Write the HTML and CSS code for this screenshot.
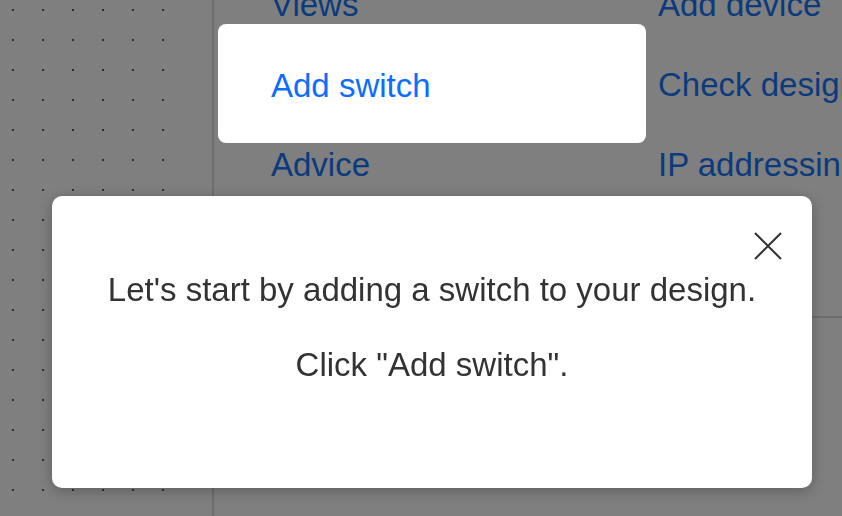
FILE: index.html
```html
<!DOCTYPE html>
<html lang="en">
<head>
<meta charset="utf-8">
<title>Add switch tour</title>
<link rel="stylesheet" href="styles.css">
</head>
<body>
<div class="app">
  <div class="canvas"><div class="dots"></div></div>
  <div class="panel">
    <nav class="menu">
      <a class="menu-link">Views</a>
      <a class="menu-link">Add device</a>
      <a class="menu-link">Add switch</a>
      <a class="menu-link">Check design</a>
      <a class="menu-link">Advice</a>
      <a class="menu-link">IP addressing</a>
    </nav>
    <div class="separator"></div>
  </div>
</div>

<div class="overlay"></div>

<div class="spotlight">
  <a class="spotlight-link">Add switch</a>
</div>

<div class="popover">
  <button class="close" aria-label="Close">
    <svg width="28" height="28" viewBox="0 0 28 28"><path d="M1 1 L27 27 M27 1 L1 27" stroke="#333" stroke-width="2" fill="none"/></svg>
  </button>
  <p class="tour-text">Let's start by adding a switch to your design.</p>
  <p class="tour-text">Click "Add switch".</p>
</div>
</body>
</html>
```

FILE: styles.css
```css
html, body {
  margin: 0;
  padding: 0;
  height: 516px;
  overflow: hidden;
  background: #fff;
  font-family: "Liberation Sans", Arial, sans-serif;
}

.app {
  display: flex;
  height: 516px;
}

.canvas {
  width: 212px;
  flex: none;
  border-right: 2px solid #dcdcdc;
  background-color: #fff;
}

.dots {
  width: 178px;
  height: 505px;
  background-image: radial-gradient(circle, #5e5e5e 0.8px, transparent 1.2px);
  background-size: 30px 30px;
  background-position: -2px -5px;
}

.panel {
  flex: 1;
  display: flex;
  flex-direction: column;
}

.menu {
  display: grid;
  grid-template-columns: 387px 1fr;
  grid-auto-rows: 80px;
  margin-top: -35px;
  padding-left: 57px;
  white-space: nowrap;
}

.menu-link {
  font-size: 33px;
  line-height: 80px;
  color: #1676f8;
}

.separator {
  margin-top: 111px;
  height: 2px;
  background: #dcdcdc;
}

.overlay {
  position: fixed;
  inset: 0;
  background: rgba(0, 0, 0, 0.5);
}

.spotlight {
  position: absolute;
  left: 218px;
  top: 24px;
  width: 428px;
  height: 119px;
  box-sizing: border-box;
  padding-left: 53px;
  display: flex;
  align-items: center;
  background: #fff;
  border-radius: 8px;
}

.spotlight-link {
  font-size: 33px;
  color: #0d6efd;
  line-height: 40px;
  padding-top: 4px;
}

.popover {
  position: absolute;
  left: 52px;
  top: 196px;
  width: 760px;
  height: 292px;
  box-sizing: border-box;
  padding-top: 74px;
  background: #fff;
  border-radius: 10px;
  box-shadow: 0 3px 14px rgba(0, 0, 0, 0.25);
  text-align: center;
}

.popover::before {
  content: "";
  position: absolute;
  left: 357px;
  top: -22px;
  width: 45px;
  height: 45px;
  background: #fff;
  transform: rotate(45deg);
  box-shadow: -3px -3px 8px rgba(0, 0, 0, 0.12);
  z-index: -1;
}

.tour-text {
  position: relative;
  margin: 0 0 35px;
  font-size: 33px;
  line-height: 40px;
  color: #333;
}

.close {
  position: absolute;
  left: 702px;
  top: 36px;
  width: 28px;
  height: 28px;
  padding: 0;
  border: 0;
  background: none;
  display: block;
}

.close svg {
  display: block;
}
```
